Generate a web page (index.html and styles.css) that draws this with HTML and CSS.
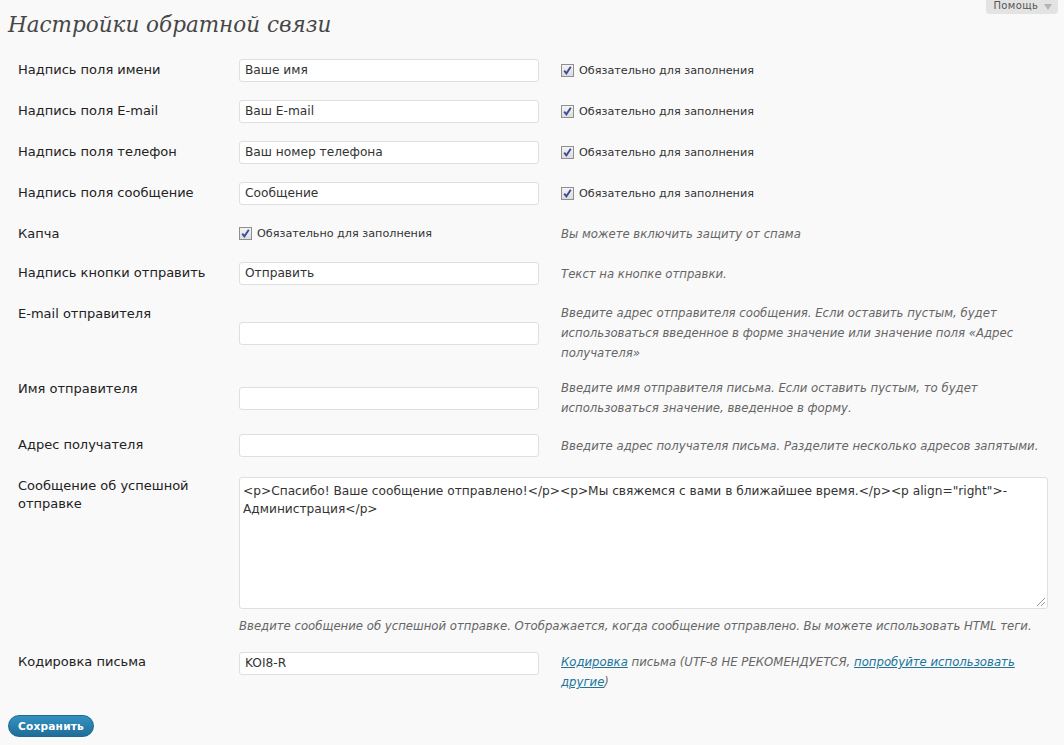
FILE: index.html
```html
<!DOCTYPE html>
<html lang="ru">
<head>
<meta charset="utf-8">
<title>Настройки обратной связи</title>
<link rel="stylesheet" href="styles.css">
</head>
<body>
<div class="help-tab">Помощь <span class="tri"></span></div>
<div class="wrap">
  <h2 class="title">Настройки обратной связи</h2>
  <div class="form">
    <div class="row">
      <div class="lbl">Надпись поля имени</div>
      <div class="fld"><div class="inp">Ваше имя</div></div>
      <div class="chk"><span class="cb"><svg viewBox="0 0 11 11" width="11" height="11"><path d="M2.2 5.6 L4.4 8.4 L8.8 1.8" fill="none" stroke="#3b4c97" stroke-width="1.9"/></svg></span>Обязательно для заполнения</div>
    </div>
    <div class="row">
      <div class="lbl">Надпись поля E-mail</div>
      <div class="fld"><div class="inp">Ваш E-mail</div></div>
      <div class="chk"><span class="cb"><svg viewBox="0 0 11 11" width="11" height="11"><path d="M2.2 5.6 L4.4 8.4 L8.8 1.8" fill="none" stroke="#3b4c97" stroke-width="1.9"/></svg></span>Обязательно для заполнения</div>
    </div>
    <div class="row">
      <div class="lbl">Надпись поля телефон</div>
      <div class="fld"><div class="inp">Ваш номер телефона</div></div>
      <div class="chk"><span class="cb"><svg viewBox="0 0 11 11" width="11" height="11"><path d="M2.2 5.6 L4.4 8.4 L8.8 1.8" fill="none" stroke="#3b4c97" stroke-width="1.9"/></svg></span>Обязательно для заполнения</div>
    </div>
    <div class="row">
      <div class="lbl">Надпись поля сообщение</div>
      <div class="fld"><div class="inp">Сообщение</div></div>
      <div class="chk"><span class="cb"><svg viewBox="0 0 11 11" width="11" height="11"><path d="M2.2 5.6 L4.4 8.4 L8.8 1.8" fill="none" stroke="#3b4c97" stroke-width="1.9"/></svg></span>Обязательно для заполнения</div>
    </div>
    <div class="row">
      <div class="lbl">Капча</div>
      <div class="fld"><div class="chk"><span class="cb"><svg viewBox="0 0 11 11" width="11" height="11"><path d="M2.2 5.6 L4.4 8.4 L8.8 1.8" fill="none" stroke="#3b4c97" stroke-width="1.9"/></svg></span>Обязательно для заполнения</div></div>
      <div class="desc">Вы можете включить защиту от спама</div>
    </div>
    <div class="row">
      <div class="lbl">Надпись кнопки отправить</div>
      <div class="fld"><div class="inp">Отправить</div></div>
      <div class="desc">Текст на кнопке отправки.</div>
    </div>
    <div class="row row-email">
      <div class="lbl">E-mail отправителя</div>
      <div class="fld"><div class="inp"></div></div>
      <div class="desc">Введите адрес отправителя сообщения. Если оставить пустым, будет использоваться введенное в форме значение или значение поля «Адрес получателя»</div>
    </div>
    <div class="row row-name">
      <div class="lbl">Имя отправителя</div>
      <div class="fld"><div class="inp"></div></div>
      <div class="desc">Введите имя отправителя письма. Если оставить пустым, то будет использоваться значение, введенное в форму.</div>
    </div>
    <div class="row">
      <div class="lbl">Адрес получателя</div>
      <div class="fld"><div class="inp"></div></div>
      <div class="desc one-line">Введите адрес получателя письма. Разделите несколько адресов запятыми.</div>
    </div>
    <div class="row row-msg">
      <div class="lbl lbl-tight">Сообщение об успешной отправке</div>
      <div class="wide">
        <div class="area">&lt;p&gt;Спасибо! Ваше сообщение отправлено!&lt;/p&gt;&lt;p&gt;Мы свяжемся с вами в ближайшее время.&lt;/p&gt;&lt;p align="right"&gt;-Администрация&lt;/p&gt;<span class="grip"></span></div>
        <div class="desc below">Введите сообщение об успешной отправке. Отображается, когда сообщение отправлено. Вы можете использовать HTML теги.</div>
      </div>
    </div>
    <div class="row row-top">
      <div class="lbl">Кодировка письма</div>
      <div class="fld"><div class="inp">KOI8-R</div></div>
      <div class="desc"><a href="#">Кодировка</a> письма (UTF-8 НЕ РЕКОМЕНДУЕТСЯ, <a href="#">попробуйте использовать другие</a>)</div>
    </div>
  </div>
  <div class="actions"><span class="btn">Сохранить</span></div>
</div>
</body>
</html>
```
FILE: styles.css
```css
html, body {
  margin: 0;
  padding: 0;
  background: #f9f9f9;
}
body {
  font-family: "DejaVu Sans", Verdana, sans-serif;
  font-size: 13px;
  color: #222;
}
.help-tab {
  position: absolute;
  top: 0;
  right: 6px;
  height: 14px;
  padding: 0 6px 0 7px;
  background: #e3e3e3;
  border-radius: 0 0 4px 4px;
  font-size: 10px;
  line-height: 11px;
  color: #555;
  letter-spacing: 0.4px;
}
.help-tab .tri {
  display: inline-block;
  width: 0;
  height: 0;
  border-left: 4px solid transparent;
  border-right: 4px solid transparent;
  border-top: 6px solid #b5b5b5;
  margin-left: 2px;
  vertical-align: -1px;
}
.wrap {
  padding: 0 0 0 8px;
}
.title {
  margin: 0;
  padding: 10px 0 0 0;
  height: 50px;
  box-sizing: border-box;
  font-family: "DejaVu Serif", Georgia, serif;
  font-style: italic;
  font-weight: normal;
  font-size: 21.5px;
  line-height: 30px;
  color: #464646;
}
.form {
  padding-left: 10px;
}
.row {
  display: grid;
  grid-template-columns: 221px 322px 1fr;
  align-items: center;
  padding: 9px 0;
}
.row-email { padding-bottom: 6px; }
.row-name { padding-bottom: 7px; }
.row-msg { padding-top: 11px; padding-bottom: 7px; }
.row-top { align-items: start; }
.lbl {
  align-self: start;
  line-height: 20px;
  margin-top: 1px;
  color: #222;
}
.row-top .lbl { margin-top: 0; }
.lbl-tight {
  line-height: 18px;
  margin-top: 0;
}
.inp {
  box-sizing: border-box;
  width: 300px;
  height: 23px;
  background: #fff;
  border: 1px solid #dfdfdf;
  border-radius: 3px;
  padding: 0 5px;
  font-size: 12.2px;
  line-height: 21px;
  color: #333;
  white-space: nowrap;
}
.chk {
  display: flex;
  align-items: center;
  font-size: 11.2px;
  line-height: 20px;
  color: #333;
}
.cb {
  box-sizing: border-box;
  width: 13px;
  height: 13px;
  border: 1px solid #8f8f8f;
  background: linear-gradient(#f4f4f4, #dcdcdc);
  display: inline-flex;
  align-items: center;
  justify-content: center;
  margin-right: 5px;
}
.desc {
  font-style: italic;
  font-size: 11.7px;
  color: #666;
  line-height: 20px;
  padding-right: 8px;
}
.one-line {
  white-space: nowrap;
  padding-right: 0;
}
.desc a {
  color: #21759b;
  text-decoration: underline;
}
.wide {
  grid-column: 2 / 4;
}
.area {
  position: relative;
  box-sizing: border-box;
  width: 809px;
  height: 132px;
  background: #fff;
  border: 1px solid #dfdfdf;
  border-radius: 3px;
  padding: 4px 3px;
  font-size: 12.2px;
  line-height: 18px;
  color: #333;
}
.grip {
  position: absolute;
  right: 2px;
  bottom: 2px;
  width: 8px;
  height: 8px;
  background: linear-gradient(135deg, transparent 45%, #999 45%, #999 55%, transparent 55%, transparent 70%, #999 70%, #999 80%, transparent 80%);
}
.below {
  margin-top: 7px;
}
.actions {
  padding-top: 14px;
}
.btn {
  display: inline-block;
  height: 20px;
  padding: 0 9px;
  border-radius: 11px;
  background: linear-gradient(#3392c0, #1f6d97);
  border: 1px solid #1d6a92;
  color: #fff;
  font-weight: bold;
  font-size: 10.6px;
  line-height: 20px;
  letter-spacing: 0.2px;
}
```
